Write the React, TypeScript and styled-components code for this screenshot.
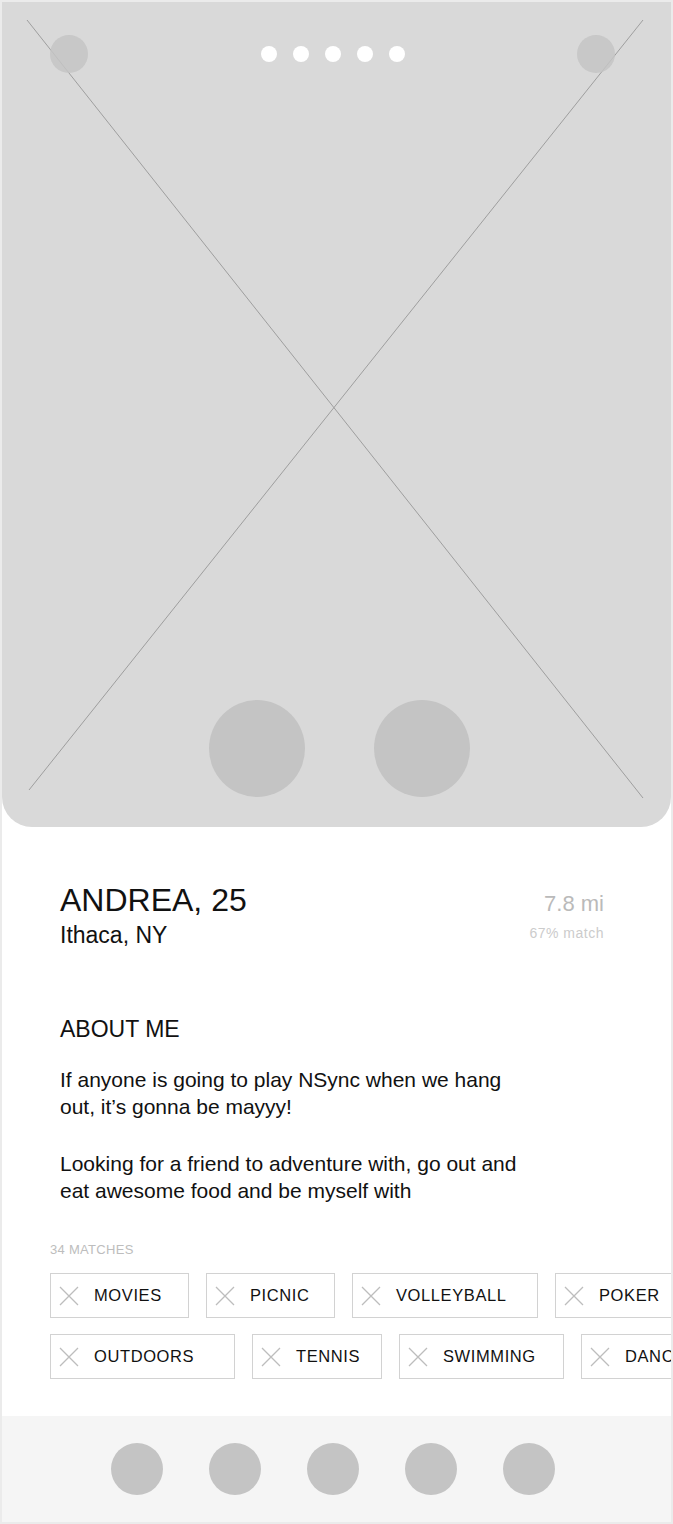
import React from "react";
import styled, { createGlobalStyle } from "styled-components";

const Global = createGlobalStyle`
  html, body { margin: 0; padding: 0; background: #ffffff; }
  body { font-family: "Liberation Sans", Arial, sans-serif; }
`;

const Frame = styled.div`
  width: 673px;
  height: 1524px;
  box-sizing: border-box;
  border: 2px solid #ebebeb;
  background: #fff;
  display: flex;
  flex-direction: column;
  overflow: hidden;
`;

const Photo = styled.div`
  position: relative;
  height: 825px;
  flex: none;
  background: #d9d9d9;
  border-radius: 0 0 30px 30px;
  display: flex;
  flex-direction: column;
  justify-content: space-between;
`;

const Cross = styled.svg`
  position: absolute;
  inset: 0;
  width: 100%;
  height: 100%;
  pointer-events: none;
`;

const TopBar = styled.div`
  position: relative;
  display: flex;
  align-items: center;
  justify-content: space-between;
  padding: 33px 56px 0 48px;
`;

const SmallCircle = styled.div`
  width: 38px;
  height: 38px;
  border-radius: 50%;
  background: #c4c4c4;
  opacity: 0.85;
`;

const Dots = styled.div`
  display: flex;
  gap: 16px;
`;

const Dot = styled.div`
  width: 16px;
  height: 16px;
  border-radius: 50%;
  background: #ffffff;
`;

const Actions = styled.div`
  position: relative;
  display: flex;
  justify-content: center;
  gap: 69px;
  padding: 0 0 30px 5px;
`;

const BigCircle = styled.div`
  width: 96px;
  height: 97px;
  border-radius: 50%;
  background: #c4c4c4;
`;

const Info = styled.div`
  flex: 1;
  display: flex;
  flex-direction: column;
  padding: 55px 0 0 58px;
`;

const HeaderRow = styled.div`
  display: flex;
  justify-content: space-between;
  padding-right: 67px;
`;

const Name = styled.div`
  font-size: 32px;
  line-height: 36px;
  color: #111;
`;

const City = styled.div`
  font-size: 23px;
  line-height: 26px;
  color: #111;
  margin-top: 4px;
`;

const Stats = styled.div`
  display: flex;
  flex-direction: column;
  align-items: flex-end;
  padding-top: 10px;
`;

const Distance = styled.div`
  font-size: 22px;
  line-height: 24px;
  color: #bababa;
`;

const Match = styled.div`
  font-size: 14px;
  line-height: 16px;
  letter-spacing: 0.5px;
  color: #cccccc;
  margin-top: 9px;
`;

const SectionTitle = styled.div`
  font-size: 23px;
  line-height: 26px;
  color: #111;
  margin-top: 68px;
`;

const Paragraph = styled.p<{ $gap: number }>`
  margin: 0;
  margin-top: ${(p) => p.$gap}px;
  width: 482px;
  font-size: 21px;
  line-height: 26.5px;
  color: #111;
`;

const MatchesLabel = styled.div`
  font-size: 13px;
  line-height: 16px;
  letter-spacing: 0.3px;
  color: #bdbdbd;
  margin: 38px 0 0 -10px;
`;

const ChipRow = styled.div<{ $top: number }>`
  display: flex;
  gap: 17px;
  margin: ${(p) => p.$top}px 0 0 -10px;
  flex-wrap: nowrap;
`;

const Chip = styled.div<{ $w: number }>`
  flex: none;
  box-sizing: border-box;
  width: ${(p) => p.$w}px;
  height: 45px;
  border: 1.5px solid #d2d2d2;
  display: flex;
  align-items: center;
  padding-left: 7px;
  gap: 14px;
  font-size: 16.5px;
  letter-spacing: 0.6px;
  color: #111;
  white-space: nowrap;
`;

const ChipX = styled.svg`
  width: 22px;
  height: 22px;
  flex: none;
`;

const BottomBar = styled.div`
  flex: none;
  height: 106px;
  background: #f5f5f5;
  display: flex;
  align-items: center;
  padding-left: 109px;
  gap: 46px;
`;

const NavCircle = styled.div`
  width: 52px;
  height: 52px;
  border-radius: 50%;
  background: #c4c4c4;
`;

const XIcon = () => (
  <ChipX viewBox="0 0 22 22">
    <path d="M2 2 L20 20 M20 2 L2 20" stroke="#bdbdbd" strokeWidth="1.3" fill="none" />
  </ChipX>
);

const row1 = [
  { label: "MOVIES", w: 139 },
  { label: "PICNIC", w: 129 },
  { label: "VOLLEYBALL", w: 186 },
  { label: "POKER", w: 130 },
];
const row2 = [
  { label: "OUTDOORS", w: 185 },
  { label: "TENNIS", w: 130 },
  { label: "SWIMMING", w: 165 },
  { label: "DANCING", w: 150 },
];

export default function App() {
  return (
    <>
      <Global />
      <Frame>
        <Photo>
          <Cross viewBox="0 0 669 825" preserveAspectRatio="none">
            <line x1="25" y1="18" x2="641" y2="796" stroke="#9e9e9e" strokeWidth="1" />
            <line x1="641" y1="18" x2="27" y2="788" stroke="#9e9e9e" strokeWidth="1" />
          </Cross>
          <TopBar>
            <SmallCircle />
            <Dots>
              {[0, 1, 2, 3, 4].map((i) => (
                <Dot key={i} />
              ))}
            </Dots>
            <SmallCircle />
          </TopBar>
          <Actions>
            <BigCircle />
            <BigCircle />
          </Actions>
        </Photo>
        <Info>
          <HeaderRow>
            <div>
              <Name>ANDREA, 25</Name>
              <City>Ithaca, NY</City>
            </div>
            <Stats>
              <Distance>7.8 mi</Distance>
              <Match>67% match</Match>
            </Stats>
          </HeaderRow>
          <SectionTitle>ABOUT ME</SectionTitle>
          <Paragraph $gap={25}>
            If anyone is going to play NSync when we hang out, it’s gonna be mayyy!
          </Paragraph>
          <Paragraph $gap={31}>
            Looking for a friend to adventure with, go out and eat awesome food and be myself with
          </Paragraph>
          <MatchesLabel>34 MATCHES</MatchesLabel>
          <ChipRow $top={15}>
            {row1.map((c) => (
              <Chip key={c.label} $w={c.w}>
                <XIcon />
                {c.label}
              </Chip>
            ))}
          </ChipRow>
          <ChipRow $top={16}>
            {row2.map((c) => (
              <Chip key={c.label} $w={c.w}>
                <XIcon />
                {c.label}
              </Chip>
            ))}
          </ChipRow>
        </Info>
        <BottomBar>
          {[0, 1, 2, 3, 4].map((i) => (
            <NavCircle key={i} />
          ))}
        </BottomBar>
      </Frame>
    </>
  );
}
